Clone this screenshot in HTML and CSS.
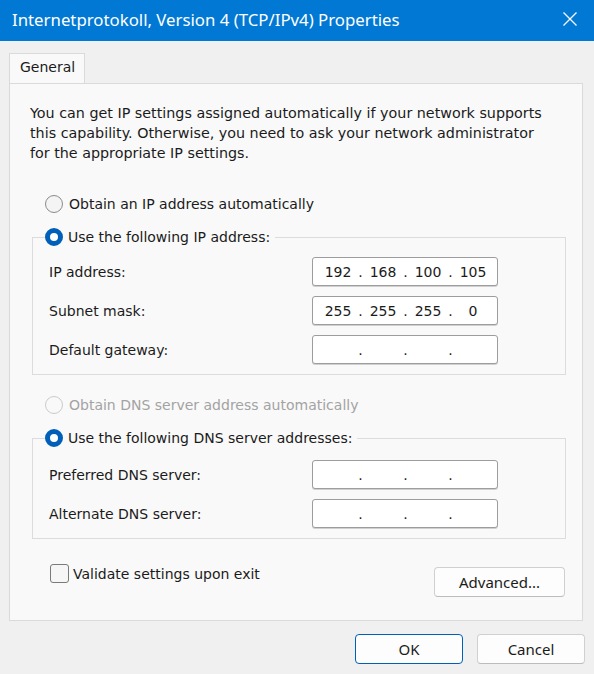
FILE: index.html
```html
<!DOCTYPE html>
<html>
<head>
<meta charset="utf-8">
<link rel="stylesheet" href="styles.css">
</head>
<body>
<div class="window">
  <div class="titlebar">
    <span class="title">Internetprotokoll, Version 4 (TCP/IPv4) Properties</span>
    <svg class="close" width="16" height="16" viewBox="0 0 16 16"><path d="M1.5 1.5 L14.5 14.5 M14.5 1.5 L1.5 14.5" stroke="#fff" stroke-width="1.3" fill="none"/></svg>
  </div>
  <div class="body">
    <div class="tabs"><div class="tab">General</div></div>
    <div class="panel">
      <p class="intro">You can get IP settings assigned automatically if your network supports this capability. Otherwise, you need to ask your network administrator for the appropriate IP settings.</p>
      <div class="radio-row first"><span class="radio"></span><span>Obtain an IP address automatically</span></div>
      <fieldset class="group">
        <legend><span class="radio on"></span><span>Use the following IP address:</span></legend>
        <div class="fields">
          <span class="label">IP address:</span>
          <div class="ip"><span class="seg">192</span><span class="dot">.</span><span class="seg">168</span><span class="dot">.</span><span class="seg">100</span><span class="dot">.</span><span class="seg">105</span></div>
          <span class="label">Subnet mask:</span>
          <div class="ip"><span class="seg">255</span><span class="dot">.</span><span class="seg">255</span><span class="dot">.</span><span class="seg">255</span><span class="dot">.</span><span class="seg">0</span></div>
          <span class="label">Default gateway:</span>
          <div class="ip"><span class="seg"></span><span class="dot">.</span><span class="seg"></span><span class="dot">.</span><span class="seg"></span><span class="dot">.</span><span class="seg"></span></div>
        </div>
      </fieldset>
      <div class="radio-row disabled"><span class="radio"></span><span>Obtain DNS server address automatically</span></div>
      <fieldset class="group dns">
        <legend><span class="radio on"></span><span>Use the following DNS server addresses:</span></legend>
        <div class="fields">
          <span class="label">Preferred DNS server:</span>
          <div class="ip"><span class="seg"></span><span class="dot">.</span><span class="seg"></span><span class="dot">.</span><span class="seg"></span><span class="dot">.</span><span class="seg"></span></div>
          <span class="label">Alternate DNS server:</span>
          <div class="ip"><span class="seg"></span><span class="dot">.</span><span class="seg"></span><span class="dot">.</span><span class="seg"></span><span class="dot">.</span><span class="seg"></span></div>
        </div>
      </fieldset>
      <div class="bottom-row">
        <div class="check-row"><span class="checkbox"></span><span>Validate settings upon exit</span></div>
        <div class="btn advanced">Advanced...</div>
      </div>
    </div>
    <div class="footer">
      <div class="btn dialog ok">OK</div>
      <div class="btn dialog">Cancel</div>
    </div>
  </div>
</div>
</body>
</html>
```
FILE: styles.css
```css
html, body {
  margin: 0;
  padding: 0;
  background: #f0f0f0;
}
.window {
  width: 594px;
  height: 674px;
  background: #f0f0f0;
  font-family: "DejaVu Sans", sans-serif;
  font-size: 14px;
  color: #1b1b1b;
  overflow: hidden;
}
.titlebar {
  height: 41px;
  background: #0078d4;
  display: flex;
  align-items: center;
  justify-content: space-between;
  padding: 0 16px 0 12px;
}
.title {
  font-family: "Noto Sans", sans-serif;
  font-size: 16.8px;
  color: #ffffff;
  padding-bottom: 2px;
}
.close {
  display: block;
  margin-top: -4px;
}
.body {
  padding: 12px 11px 0 9px;
}
.tabs {
  display: flex;
  height: 30px;
}
.tab {
  width: 76px;
  height: 30px;
  box-sizing: border-box;
  background: #f9f9f9;
  border: 1px solid #dadada;
  border-bottom: none;
  padding: 5px 0 0 10px;
  font-size: 14px;
  position: relative;
  z-index: 1;
  margin-bottom: -1px;
}
.panel {
  height: 538px;
  box-sizing: border-box;
  background: #f9f9f9;
  border: 1px solid #dadada;
  padding: 19px 16px 0 20px;
}
.intro {
  margin: 0;
  padding-right: 18px;
  line-height: 20px;
  font-size: 14.3px;
}
.radio-row {
  display: flex;
  align-items: center;
  height: 20px;
  margin-left: 15px;
  gap: 6px;
}
.radio-row.first {
  margin-top: 31px;
}
.radio-row.disabled {
  margin-top: 20px;
  color: #a3a3a3;
}
.radio {
  width: 18px;
  height: 18px;
  box-sizing: border-box;
  border-radius: 50%;
  border: 1.5px solid #8b8b8b;
  background: #f4f4f4;
  flex: none;
}
.radio-row.disabled .radio {
  border-color: #cbcbcb;
  background: #f9f9f9;
}
.radio.on {
  border: 5px solid #005fb8;
  background: #ffffff;
}
.group {
  margin: 13px 0 0 2px;
  padding: 0 67px 10px 16px;
  border: 1px solid #dcdcdc;
  border-radius: 0;
}
.group legend {
  display: flex;
  align-items: center;
  gap: 5px;
  height: 20px;
  padding: 0 5px 0 0;
  margin-left: -4px;
}
.group .fields {
  display: grid;
  grid-template-columns: 1fr 186px;
  row-gap: 10px;
  align-items: center;
  margin-top: 10px;
}
.group.dns .fields {
  margin-top: 12px;
}
.group.dns {
  margin-top: 13px;
}
.ip {
  height: 29px;
  box-sizing: border-box;
  border: 1.5px solid #9d9d9d;
  border-radius: 3px;
  background: #ffffff;
  display: flex;
  align-items: center;
  padding-left: 9px;
  box-shadow: 0 1px 0 #d0d0d0;
}
.seg {
  width: 32px;
  text-align: center;
}
.dot {
  width: 13px;
  text-align: center;
}
.bottom-row {
  display: flex;
  justify-content: space-between;
  align-items: flex-start;
  margin-top: 26px;
}
.check-row {
  display: flex;
  align-items: center;
  gap: 4px;
  margin-left: 20px;
  margin-top: -1px;
}
.checkbox {
  width: 19px;
  height: 19px;
  box-sizing: border-box;
  border: 1.5px solid #7a7a7a;
  border-radius: 3px;
  background: #f6f6f6;
}
.btn {
  box-sizing: border-box;
  height: 30px;
  display: flex;
  align-items: center;
  justify-content: center;
  background: #fdfdfd;
  border: 1px solid #d0d0d0;
  border-bottom-color: #bcbcbc;
  border-radius: 4px;
  font-family: "Noto Sans", sans-serif;
  font-size: 15px;
}
.advanced {
  width: 131px;
  margin-top: 2px;
  margin-right: 1px;
}
.footer {
  display: flex;
  justify-content: flex-end;
  gap: 14px;
  margin-top: 13px;
  margin-right: -2px;
}
.dialog {
  width: 108px;
}
.ok {
  border: 1.5px solid #005fb8;
}
```
